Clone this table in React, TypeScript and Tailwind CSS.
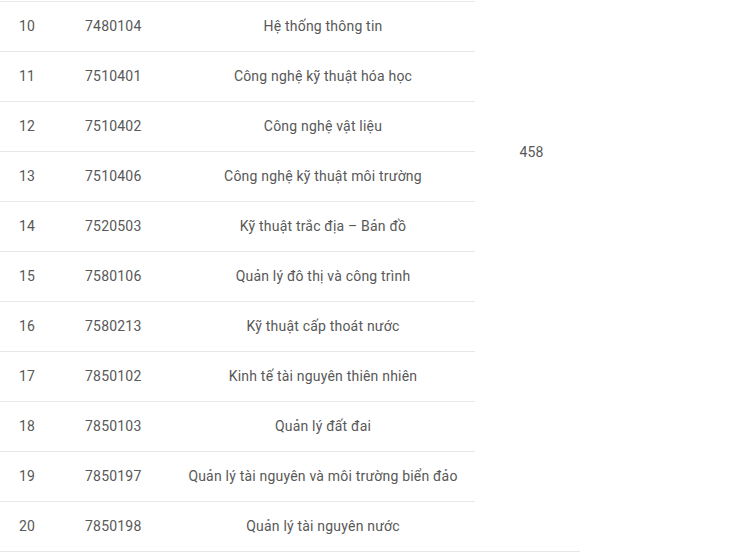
const rows = [
  { stt: 10, code: '7480104', name: 'Hệ thống thông tin' },
  { stt: 11, code: '7510401', name: 'Công nghệ kỹ thuật hóa học' },
  { stt: 12, code: '7510402', name: 'Công nghệ vật liệu' },
  { stt: 13, code: '7510406', name: 'Công nghệ kỹ thuật môi trường' },
  { stt: 14, code: '7520503', name: 'Kỹ thuật trắc địa – Bản đồ' },
  { stt: 15, code: '7580106', name: 'Quản lý đô thị và công trình' },
  { stt: 16, code: '7580213', name: 'Kỹ thuật cấp thoát nước' },
  { stt: 17, code: '7850102', name: 'Kinh tế tài nguyên thiên nhiên' },
  { stt: 18, code: '7850103', name: 'Quản lý đất đai' },
  { stt: 19, code: '7850197', name: 'Quản lý tài nguyên và môi trường biển đảo' },
  { stt: 20, code: '7850198', name: 'Quản lý tài nguyên nước' },
];

export default function App() {
  return (
    <div className="h-[559px] w-[746px] overflow-hidden bg-white pt-px font-['Roboto',sans-serif] text-[14px] tracking-[0.2px] text-[#585858]">
      <table className="w-[580px] table-fixed border-collapse">
        <colgroup>
          <col className="w-[66px]" />
          <col className="w-[105px]" />
          <col className="w-[304px]" />
          <col className="w-[105px]" />
        </colgroup>
        <tbody>
          {rows.map((r, i) => (
            <tr key={r.stt} className="h-[50px]">
              <td className="border-y border-[#e8e8e8] pl-[19px] align-middle">{r.stt}</td>
              <td className="border-y border-[#e8e8e8] pl-[19px] align-middle">{r.code}</td>
              <td className="border-y border-[#e8e8e8] text-center align-middle">{r.name}</td>
              {i === 0 && (
                <td
                  rowSpan={rows.length}
                  className="border-b border-[#e8e8e8] pl-[8px] pt-[140px] text-center align-top"
                >
                  458
                </td>
              )}
            </tr>
          ))}
        </tbody>
      </table>
    </div>
  );
}
